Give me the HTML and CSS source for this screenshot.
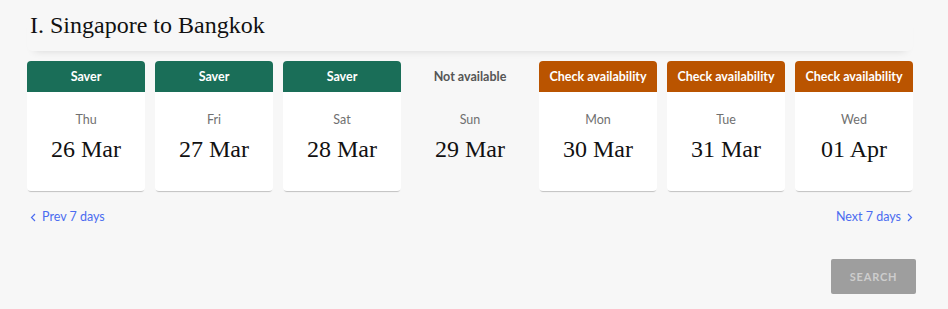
FILE: index.html
```html
<!DOCTYPE html>
<html lang="en">
  <head>
    <meta charset="utf-8" />
    <title>Flight dates</title>
    <link rel="stylesheet" href="styles.css">
  </head>
  <body>
    <section class="leg">
      <div class="leg-title">I. Singapore to Bangkok</div>

      <div class="dates">
        <div class="day saver">
          <div class="day-tag">Saver</div>
          <div class="day-body"><span class="weekday">Thu</span><span class="date">26 Mar</span></div>
        </div>
        <div class="day saver">
          <div class="day-tag">Saver</div>
          <div class="day-body"><span class="weekday">Fri</span><span class="date">27 Mar</span></div>
        </div>
        <div class="day saver">
          <div class="day-tag">Saver</div>
          <div class="day-body"><span class="weekday">Sat</span><span class="date">28 Mar</span></div>
        </div>
        <div class="day none">
          <div class="day-tag">Not available</div>
          <div class="day-body"><span class="weekday">Sun</span><span class="date">29 Mar</span></div>
        </div>
        <div class="day check">
          <div class="day-tag">Check availability</div>
          <div class="day-body"><span class="weekday">Mon</span><span class="date">30 Mar</span></div>
        </div>
        <div class="day check">
          <div class="day-tag">Check availability</div>
          <div class="day-body"><span class="weekday">Tue</span><span class="date">31 Mar</span></div>
        </div>
        <div class="day check">
          <div class="day-tag">Check availability</div>
          <div class="day-body"><span class="weekday">Wed</span><span class="date">01 Apr</span></div>
        </div>
      </div>

      <div class="pager">
        <a class="page-link" href="#">
          <svg width="6" height="9" viewBox="0 0 6 9"><polyline points="5,1 1.5,4.5 5,8" fill="none" stroke="currentColor" stroke-width="1.2"/></svg>
          Prev 7 days
        </a>
        <a class="page-link" href="#">
          Next 7 days
          <svg width="6" height="9" viewBox="0 0 6 9"><polyline points="1,1 4.5,4.5 1,8" fill="none" stroke="currentColor" stroke-width="1.2"/></svg>
        </a>
      </div>

      <div class="actions">
        <button class="search-btn" disabled>SEARCH</button>
      </div>
    </section>
  </body>
</html>
```

FILE: styles.css
```css
html,
body {
  margin: 0;
  height: 100%;
  background-color: #f7f7f7;
  font-family: Lato, "Liberation Sans", sans-serif;
}

.leg {
  width: 886px;
  margin-left: 27px;
  padding-top: 10px;
}

.leg-title {
  padding: 0 0 11px 3px;
  font-family: "Liberation Serif", serif;
  font-size: 24px;
  line-height: 30px;
  color: #111;
  box-shadow: 0 7px 8px -7px rgba(0, 0, 0, 0.13);
  border-radius: 0 0 6px 6px;
}

.dates {
  display: flex;
  gap: 10px;
  margin-top: 10px;
}

.day {
  width: 118px;
  border-radius: 4px;
  overflow: hidden;
  background-color: #fff;
  box-shadow: 0 2px 1px -1px rgba(0, 0, 0, 0.22);
  text-align: center;
}

.day-tag {
  height: 31px;
  line-height: 31px;
  font-size: 12.5px;
  font-weight: 700;
  color: #fff;
}

.saver .day-tag {
  background-color: #1a6e58;
}

.check .day-tag {
  background-color: #ba5400;
}

.none {
  background-color: transparent;
  box-shadow: none;
}

.none .day-tag {
  color: #555;
}

.day-body {
  display: flex;
  flex-direction: column;
  align-items: center;
  padding: 20px 0 27px;
}

.weekday {
  font-size: 12.5px;
  line-height: 16px;
  color: #707070;
}

.date {
  margin-top: 6px;
  font-family: "Liberation Serif", serif;
  font-size: 24px;
  line-height: 30px;
  color: #111;
}

.pager {
  display: flex;
  justify-content: space-between;
  margin-top: 18px;
  padding: 0 0 0 3px;
}

.page-link {
  display: flex;
  align-items: center;
  gap: 6px;
  font-size: 12.5px;
  line-height: 16px;
  color: #4b6cf0;
  text-decoration: none;
}

.actions {
  display: flex;
  justify-content: flex-end;
  margin: 34px -3px 0 0;
}

.search-btn {
  width: 85px;
  height: 35px;
  border: 0;
  border-radius: 2px;
  background-color: #9e9e9e;
  color: #cdcdcd;
  font-family: Lato, "Liberation Sans", sans-serif;
  font-size: 11px;
  font-weight: 700;
  letter-spacing: 0.8px;
}
```
